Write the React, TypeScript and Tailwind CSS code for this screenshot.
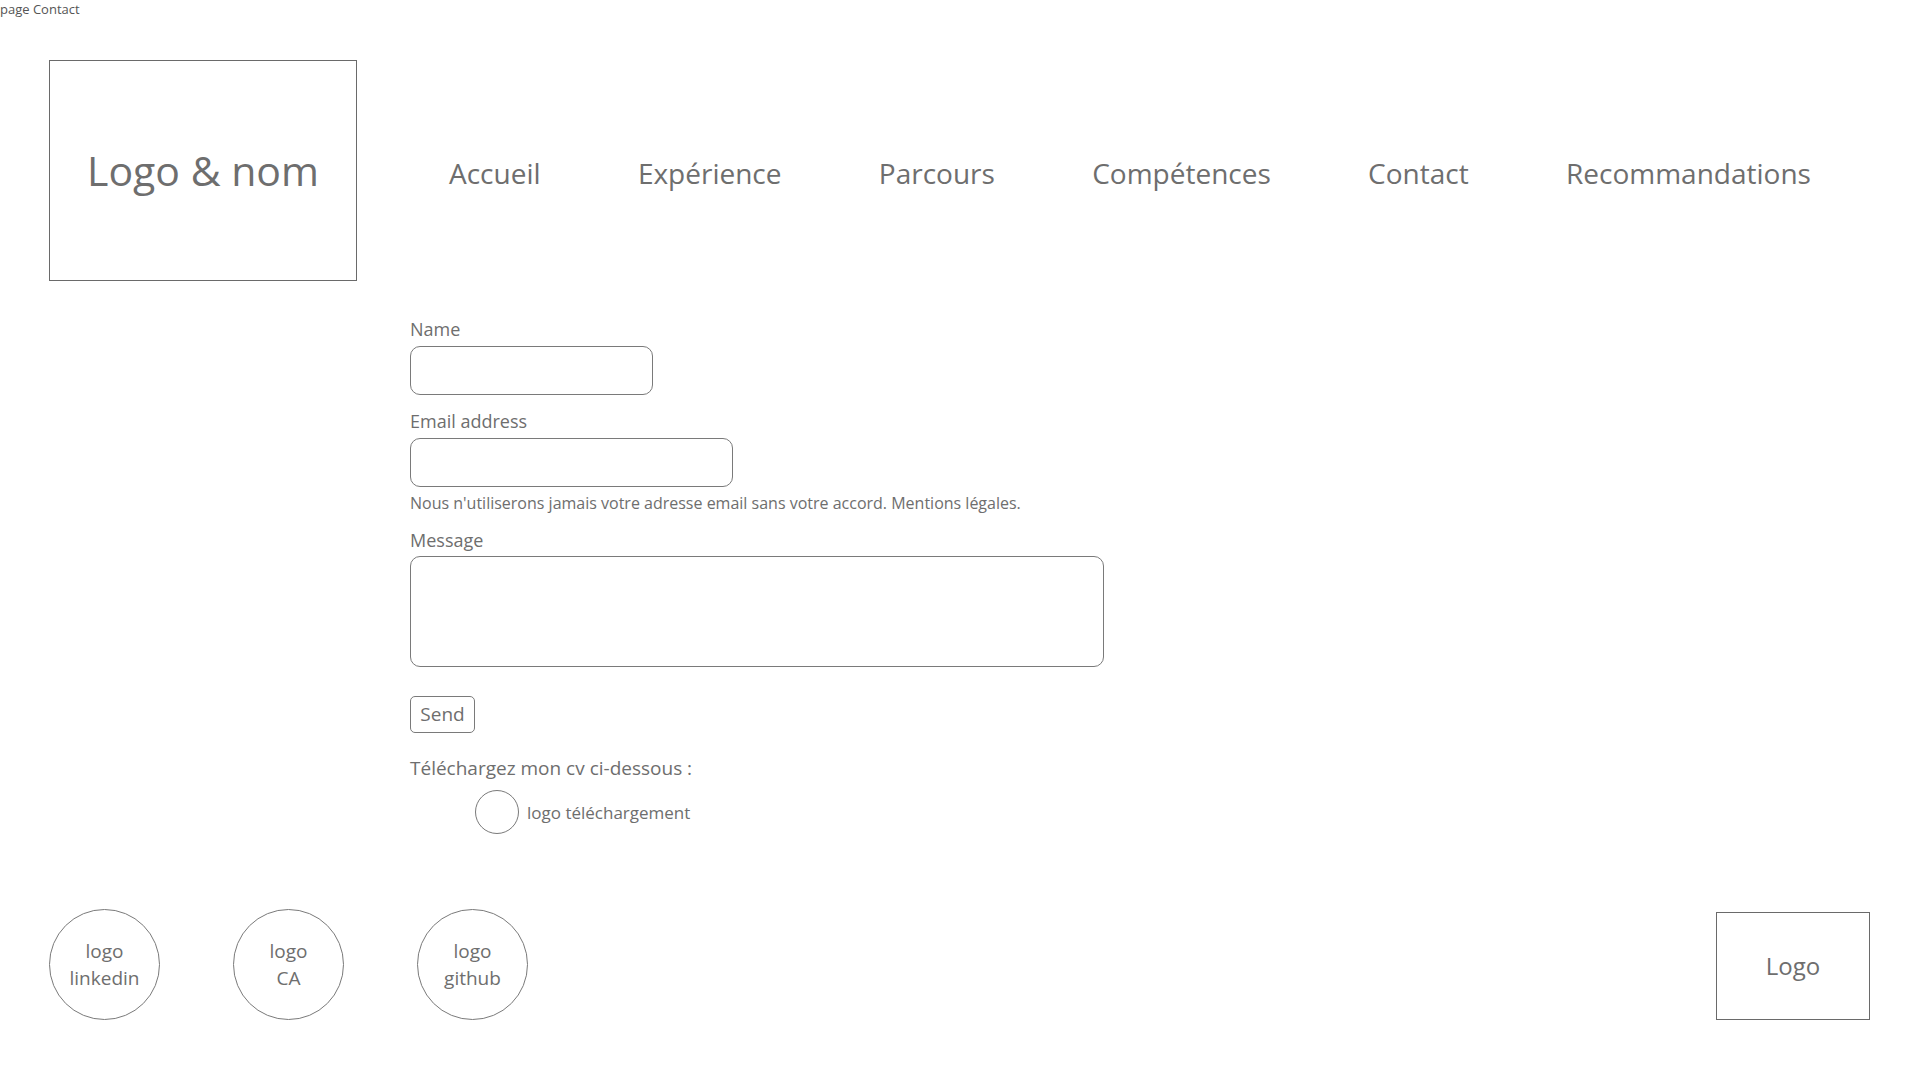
import React from 'react';

const navItems = ['Accueil', 'Expérience', 'Parcours', 'Compétences', 'Contact', 'Recommandations'];

const socials = [
  { id: 'linkedin', lines: ['logo', 'linkedin'] },
  { id: 'ca', lines: ['logo', 'CA'] },
  { id: 'github', lines: ['logo', 'github'] },
];

function Label({ children }: { children: React.ReactNode }) {
  return <label className="block text-[18px] leading-[26px] text-[#6e6e6e]">{children}</label>;
}

export default function App() {
  return (
    <div className="min-h-screen w-full bg-white text-[#6e6e6e] font-['Open_Sans',sans-serif]">
      <div className="h-[18px] pt-[2px] text-[13px] leading-[14px] text-[#555]">page Contact</div>

      {/* header */}
      <header className="mt-[42px] flex pl-[49px]">
        <div className="flex h-[221px] w-[308px] items-center justify-center border-[1.5px] border-[#6a6a6a]">
          <span className="text-[41px] leading-none">Logo &amp; nom</span>
        </div>
        <nav className="ml-[92px] flex w-[1362px] items-center justify-between pt-[4px]">
          {navItems.map((item) => (
            <a key={item} href="#" className="text-[28px] leading-none text-[#6e6e6e]">
              {item}
            </a>
          ))}
        </nav>
      </header>

      {/* contact form */}
      <form className="mt-[35px] pl-[410px]" onSubmit={(e) => e.preventDefault()}>
        <Label>Name</Label>
        <input type="text" className="mt-1 block h-[49px] w-[243px] rounded-[10px] border border-[#7a7a7a] bg-white" />

        <div className="mt-[13px]">
          <Label>Email address</Label>
        </div>
        <input type="email" className="mt-1 block h-[49px] w-[323px] rounded-[10px] border border-[#7a7a7a] bg-white" />
        <p className="mt-[6px] text-[16px] leading-[20px] text-[#6e6e6e]">
          Nous n'utiliserons jamais votre adresse email sans votre accord. Mentions légales.
        </p>

        <div className="mt-[14px]">
          <Label>Message</Label>
        </div>
        <textarea className="mt-[3px] block h-[111px] w-[694px] resize-none rounded-[10px] border border-[#7a7a7a] bg-white" />

        <button
          type="submit"
          className="mt-[29px] flex h-[37px] w-[65px] items-center justify-center rounded-[5px] border border-[#7a7a7a] text-[19px] text-[#6e6e6e]"
        >
          Send
        </button>

        <p className="mt-[22px] text-[19px] leading-[26px]">Téléchargez mon cv ci-dessous :</p>
        <div className="mt-[9px] flex items-center gap-[8px] pl-[65px]">
          <div className="h-[44px] w-[44px] rounded-full border border-[#7a7a7a]" />
          <span className="text-[17px] leading-none">logo téléchargement</span>
        </div>
      </form>

      {/* footer */}
      <footer className="mt-[75px] flex items-end justify-between pl-[49px] pr-[50px]">
        <div className="flex gap-[73px]">
          {socials.map((s) => (
            <div
              key={s.id}
              className="flex h-[111px] w-[111px] flex-col items-center justify-center rounded-full border border-[#7a7a7a] text-[19px] leading-[27px]"
            >
              {s.lines.map((l) => (
                <span key={l}>{l}</span>
              ))}
            </div>
          ))}
        </div>
        <div className="flex h-[108px] w-[154px] items-center justify-center border-[1.5px] border-[#6a6a6a]">
          <span className="text-[24px] leading-none">Logo</span>
        </div>
      </footer>
    </div>
  );
}
